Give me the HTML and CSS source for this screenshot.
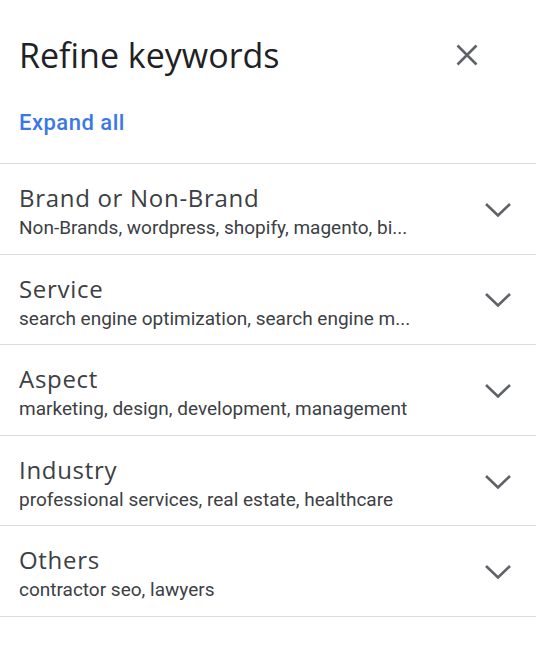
FILE: index.html
```html
<!DOCTYPE html>
<html lang="en">
<head>
    <meta charset="UTF-8" />
    <meta name="viewport" content="width=device-width, initial-scale=1.0" />
    <link rel="stylesheet" href="styles.css">
    <title>Refine keywords</title>
</head>
<body>
    <div class="panel">
        <div class="header">
            <h1 class="title">Refine keywords</h1>
            <button class="close" aria-label="Close">
                <svg width="22" height="22" viewBox="0 0 22 22">
                    <path d="M1.5 1.5L20.5 20.5M20.5 1.5L1.5 20.5" stroke="#5f6368" stroke-width="2.6" fill="none" />
                </svg>
            </button>
        </div>

        <div class="expand-row">
            <a class="expand" href="#">Expand all</a>
        </div>

        <ul class="groups">
            <li class="group">
                <div class="group-text">
                    <div class="group-name">Brand or Non-Brand</div>
                    <div class="group-items">Non-Brands, wordpress, shopify, magento, bi...</div>
                </div>
                <svg class="chevron" width="26" height="14" viewBox="0 0 26 14"><path d="M1 1L13 12.5L25 1" /></svg>
            </li>
            <li class="group">
                <div class="group-text">
                    <div class="group-name">Service</div>
                    <div class="group-items">search engine optimization, search engine m...</div>
                </div>
                <svg class="chevron" width="26" height="14" viewBox="0 0 26 14"><path d="M1 1L13 12.5L25 1" /></svg>
            </li>
            <li class="group">
                <div class="group-text">
                    <div class="group-name">Aspect</div>
                    <div class="group-items">marketing, design, development, management</div>
                </div>
                <svg class="chevron" width="26" height="14" viewBox="0 0 26 14"><path d="M1 1L13 12.5L25 1" /></svg>
            </li>
            <li class="group">
                <div class="group-text">
                    <div class="group-name">Industry</div>
                    <div class="group-items">professional services, real estate, healthcare</div>
                </div>
                <svg class="chevron" width="26" height="14" viewBox="0 0 26 14"><path d="M1 1L13 12.5L25 1" /></svg>
            </li>
            <li class="group">
                <div class="group-text">
                    <div class="group-name">Others</div>
                    <div class="group-items">contractor seo, lawyers</div>
                </div>
                <svg class="chevron" width="26" height="14" viewBox="0 0 26 14"><path d="M1 1L13 12.5L25 1" /></svg>
            </li>
        </ul>
    </div>
</body>
</html>
```

FILE: styles.css
```css
* {
    box-sizing: border-box;
    margin: 0;
    padding: 0;
}
body {
    background-color: #fff;
    font-family: "Open Sans", Roboto, sans-serif;
}
.panel {
    width: 536px;
}
.header {
    display: flex;
    align-items: flex-start;
    justify-content: space-between;
    padding: 33px 0 0 19px;
    height: 77px;
}
.title {
    font-size: 34px;
    font-weight: 400;
    color: #202124;
    line-height: 44px;
}
.close {
    border: none;
    background: none;
    width: 22px;
    height: 22px;
    margin: 11px 58px 0 0;
    display: flex;
}
.expand-row {
    height: 86px;
    padding: 32px 0 0 19px;
}
.expand {
    font-family: Roboto, "Open Sans", sans-serif;
    font-size: 22px;
    line-height: 28px;
    letter-spacing: 0.5px;
    color: #3b78e7;
    text-decoration: none;
    font-weight: 500;
}
.groups {
    list-style: none;
    border-top: 1px solid #dadce0;
}
.group {
    display: flex;
    align-items: flex-start;
    height: 90.6px;
    padding: 0 25px 0 19px;
    border-bottom: 1px solid #dadce0;
}
.group-text {
    flex: 1;
    min-width: 0;
    padding-top: 18px;
}
.group-name {
    font-size: 24px;
    line-height: 32px;
    letter-spacing: 0.7px;
    color: #3c4043;
}
.group-items {
    font-family: Roboto, "Open Sans", sans-serif;
    font-size: 19px;
    line-height: 27px;
    color: #3c4043;
    white-space: nowrap;
    overflow: hidden;
}
.chevron {
    flex: none;
    align-self: center;
    margin-top: 2px;
}
.chevron path {
    fill: none;
    stroke: #5f6368;
    stroke-width: 2.6;
}
```
